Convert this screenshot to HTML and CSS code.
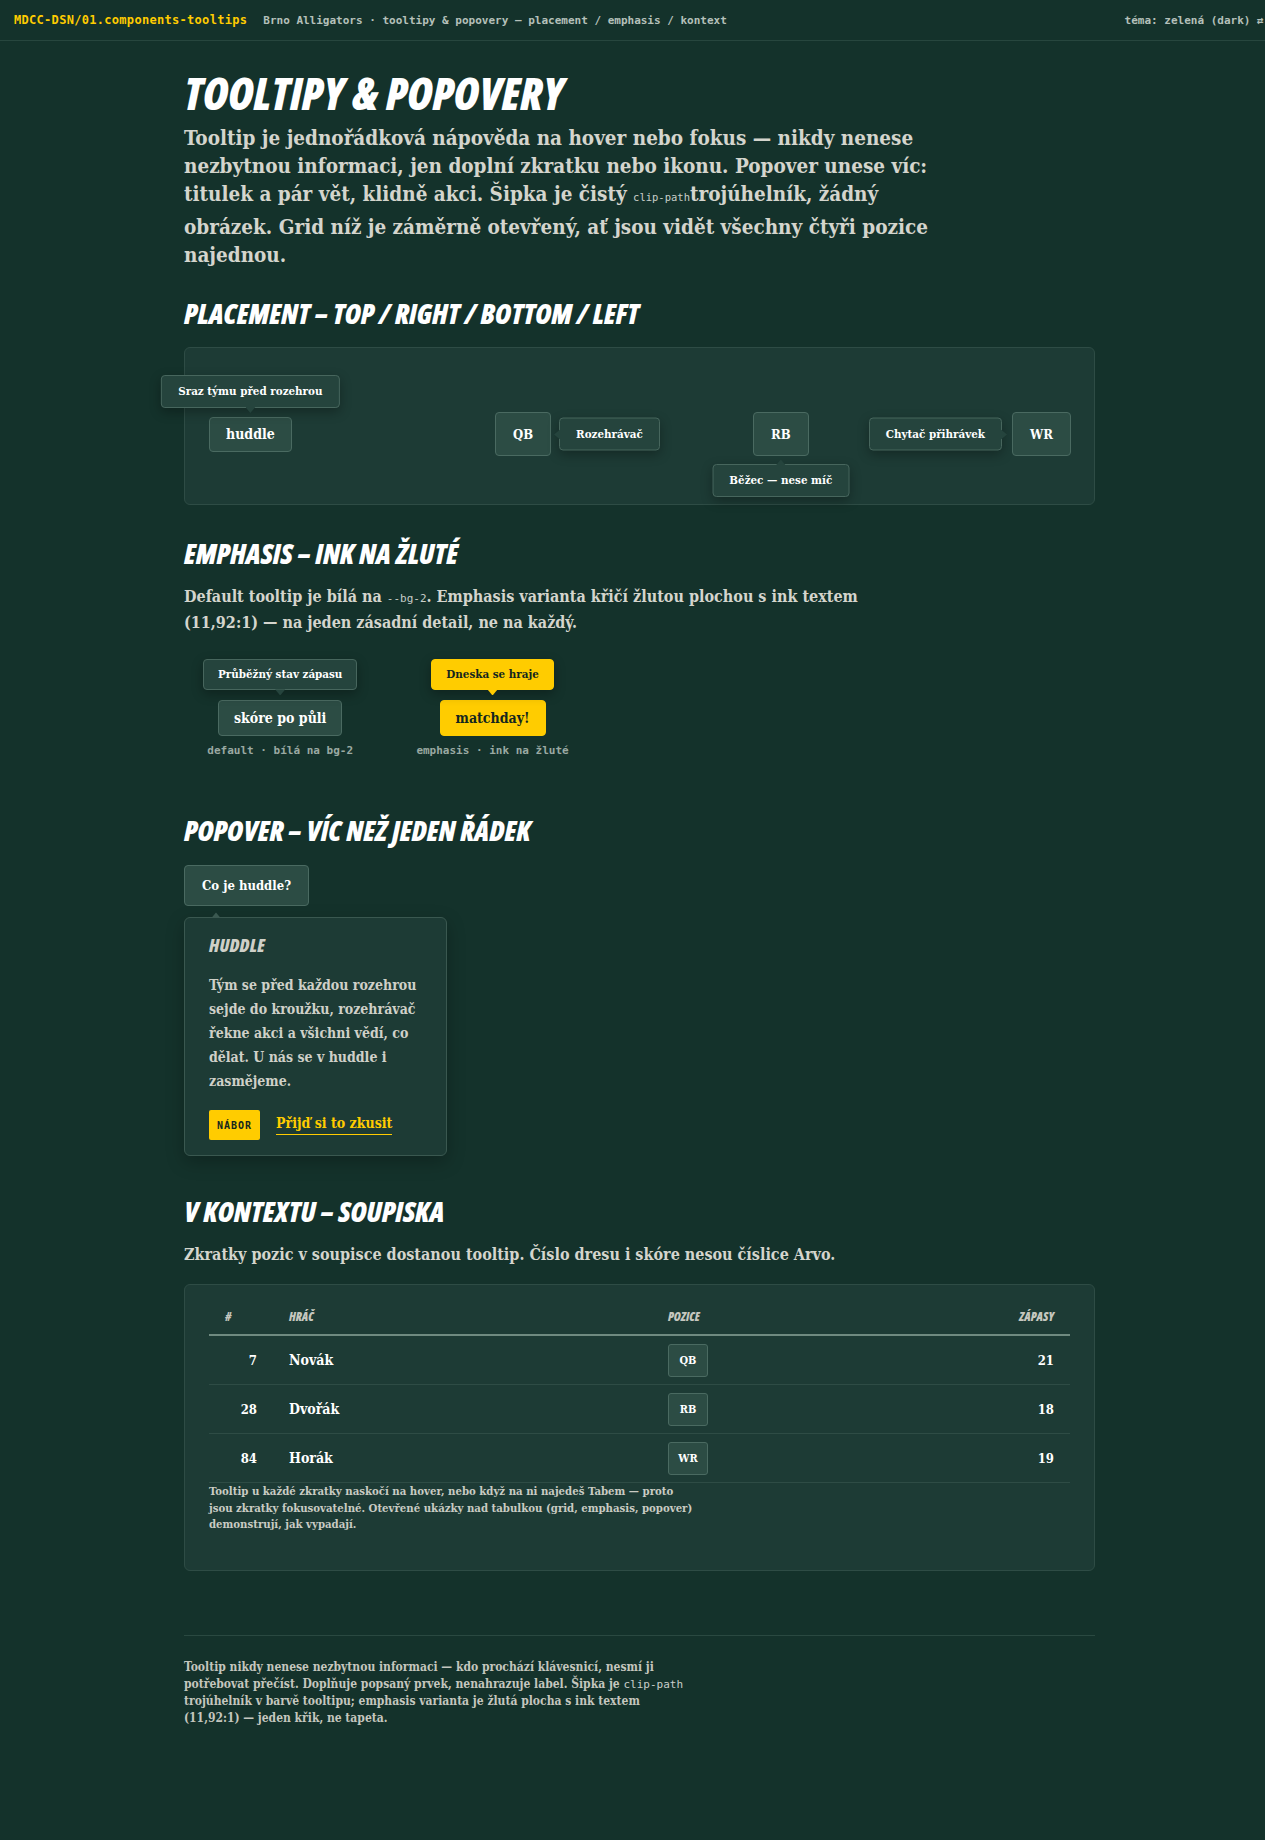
FILE: index.html
```html
<!DOCTYPE html>
<html lang="cs">
<head>
  <meta charset="UTF-8" />
  <meta name="viewport" content="width=device-width, initial-scale=1.0" />
  <title>Tooltipy &amp; popovery | Brno Alligators</title>
  <link rel="stylesheet" href="styles.css">
</head>
<body>

  <header class="topbar">
    <span class="crumb">MDCC-DSN/01.components-tooltips</span>
    <span class="meta">Brno Alligators · tooltipy &amp; popovery — placement / emphasis / kontext</span>
    <span class="theme">téma: zelená (dark) ⇄ světlá</span>
  </header>

  <main class="page">
    <h1>Tooltipy &amp; popovery</h1>
    <p class="lead">
      Tooltip je jednořádková nápověda na hover nebo fokus — nikdy nenese nezbytnou informaci, jen doplní zkratku nebo ikonu.
      Popover unese víc: titulek a pár vět, klidně akci. Šipka je čistý <code>clip-path</code>trojúhelník, žádný obrázek.
      Grid níž je záměrně otevřený, ať jsou vidět všechny čtyři pozice najednou.
    </p>

    <section class="block block-placement">
      <h2>Placement – top / right / bottom / left</h2>
      <div class="card placement">
        <div class="cell">
          <span class="anchor">
            <button class="trigger">huddle</button>
            <span class="tip tip-top">Sraz týmu před rozehrou</span>
          </span>
        </div>
        <div class="cell">
          <span class="anchor">
            <button class="trigger trigger-abbr">QB</button>
            <span class="tip tip-right">Rozehrávač</span>
          </span>
        </div>
        <div class="cell">
          <span class="anchor">
            <button class="trigger trigger-abbr">RB</button>
            <span class="tip tip-bottom">Běžec — nese míč</span>
          </span>
        </div>
        <div class="cell">
          <span class="anchor">
            <button class="trigger trigger-abbr">WR</button>
            <span class="tip tip-left">Chytač přihrávek</span>
          </span>
        </div>
      </div>
    </section>

    <section class="block block-emphasis">
      <h2>Emphasis – ink na žluté</h2>
      <p class="text">
        Default tooltip je bílá na <code>--bg-2</code>. Emphasis varianta křičí žlutou plochou s ink textem
        (11,92:1) — na jeden zásadní detail, ne na každý.
      </p>
      <div class="demo-row">
        <figure class="demo">
          <span class="tip tip-static">Průběžný stav zápasu</span>
          <button class="trigger trigger-md">skóre po půli</button>
          <figcaption>default · bílá na bg-2</figcaption>
        </figure>
        <figure class="demo">
          <span class="tip tip-static tip-em">Dneska se hraje</span>
          <button class="trigger trigger-md trigger-em">matchday!</button>
          <figcaption>emphasis · ink na žluté</figcaption>
        </figure>
      </div>
    </section>

    <section class="block block-popover">
      <h2>Popover – víc než jeden řádek</h2>
      <button class="trigger trigger-lg">Co je huddle?</button>
      <div class="popover">
        <h3>Huddle</h3>
        <p>Tým se před každou rozehrou sejde do kroužku, rozehrávač řekne akci a všichni vědí, co dělat. U nás se v huddle i zasmějeme.</p>
        <div class="popover-actions">
          <span class="badge">Nábor</span>
          <a href="#" class="link">Přijď si to zkusit</a>
        </div>
      </div>
    </section>

    <section class="block block-roster">
      <h2>V kontextu – soupiska</h2>
      <p class="text">Zkratky pozic v soupisce dostanou tooltip. Číslo dresu i skóre nesou číslice Arvo.</p>
      <div class="card roster">
        <table>
          <colgroup>
            <col class="col-num">
            <col class="col-name">
            <col class="col-pos">
            <col>
          </colgroup>
          <thead>
            <tr>
              <th>#</th>
              <th>Hráč</th>
              <th>Pozice</th>
              <th class="right">Zápasy</th>
            </tr>
          </thead>
          <tbody>
            <tr>
              <td class="right num">7</td>
              <td>Novák</td>
              <td><button class="pos">QB</button></td>
              <td class="right num">21</td>
            </tr>
            <tr>
              <td class="right num">28</td>
              <td>Dvořák</td>
              <td><button class="pos">RB</button></td>
              <td class="right num">18</td>
            </tr>
            <tr>
              <td class="right num">84</td>
              <td>Horák</td>
              <td><button class="pos">WR</button></td>
              <td class="right num">19</td>
            </tr>
          </tbody>
        </table>
        <p class="note">Tooltip u každé zkratky naskočí na hover, nebo když na ni najedeš Tabem — proto jsou zkratky fokusovatelné. Otevřené ukázky nad tabulkou (grid, emphasis, popover) demonstrují, jak vypadají.</p>
      </div>
    </section>
  </main>

  <footer class="foot">
    <p>Tooltip nikdy nenese nezbytnou informaci — kdo prochází klávesnicí, nesmí ji potřebovat přečíst. Doplňuje popsaný prvek, nenahrazuje label. Šipka je <code>clip-path</code> trojúhelník v barvě tooltipu; emphasis varianta je žlutá plocha s ink textem (11,92:1) — jeden křik, ne tapeta.</p>
  </footer>

</body>
</html>
```
FILE: styles.css
```css
:root {
  --bg: #14322b;
  --bg-2: #1d3b35;
  --line: #2e4c45;
  --btn: #2c4c44;
  --btn-line: #4a6a61;
  --tip: #25443d;
  --tip-line: #47665d;
  --yellow: #ffcc00;
  --ink: #13261f;
  --text: #f4f3ed;
  --muted: #d4d5cd;
  --mono: "DejaVu Sans Mono", "Liberation Mono", monospace;
  --slab: "DejaVu Serif", "Liberation Serif", serif;
  --display: "Open Sans", "DejaVu Sans", sans-serif;
}

html, body {
  margin: 0;
  padding: 0;
}

body {
  background: var(--bg);
  color: var(--text);
  font-family: var(--slab);
  font-stretch: condensed;
  font-weight: 700;
}

code {
  font-family: var(--mono);
  font-stretch: normal;
  font-weight: 400;
  line-height: 1;
  white-space: nowrap;
  color: #c8cec9;
}

/* top bar */

.topbar {
  display: flex;
  align-items: center;
  gap: 16px;
  height: 40px;
  padding: 0 14px;
  border-bottom: 1px solid #27463e;
  overflow: hidden;
  white-space: nowrap;
  font-family: var(--mono);
  font-stretch: normal;
  font-size: 11px;
  color: #b5c0ba;
}

.crumb {
  color: var(--yellow);
  font-size: 12px;
  letter-spacing: 0.3px;
}

.theme {
  margin-left: auto;
  margin-right: -59px;
}

/* page */

.page {
  max-width: 911px;
  margin: 0 auto;
  padding-left: 14px;
}

h1, h2, h3 {
  font-family: var(--display);
  font-stretch: condensed;
  font-style: italic;
  font-weight: 800;
  text-transform: uppercase;
  color: #fff;
}

h1 {
  margin: 28px 0 0;
  font-size: 44px;
  line-height: 1.1;
}

h2 {
  margin: 0 0 18px;
  font-size: 28px;
  line-height: 32px;
}

.lead {
  margin: 7px 0 0;
  max-width: 752px;
  font-size: 20.5px;
  line-height: 28px;
  color: var(--muted);
}

.lead code {
  display: inline-block;
  font-size: 10.5px;
  line-height: 28px;
  padding-bottom: 2px;
}

.text {
  margin: 0;
  max-width: 720px;
  font-size: 16px;
  line-height: 26px;
  color: var(--muted);
}

.text code {
  font-size: 11px;
}

.block-placement { margin-top: 28px; }
.block-emphasis { margin-top: 32px; }
.block-popover { margin-top: 56px; }
.block-roster { margin-top: 39px; }

.block-emphasis h2,
.block-roster h2 {
  margin-bottom: 15px;
}

.block-popover h2 {
  margin-bottom: 19px;
}

.card {
  background: var(--bg-2);
  border: 1px solid var(--line);
  border-radius: 6px;
}

/* triggers */

.trigger {
  font-family: var(--slab);
  font-stretch: condensed;
  font-weight: 700;
  font-size: 14px;
  color: #fff;
  background: var(--btn);
  border: 1px solid var(--btn-line);
  border-radius: 4px;
  height: 35px;
  padding: 0 16px;
  cursor: pointer;
}

.trigger-abbr {
  height: 44px;
  padding: 0 17px;
  font-size: 13px;
}

.trigger-md {
  height: 36px;
  padding: 0 15px;
}

.trigger-lg {
  height: 41px;
  padding: 0 17px;
  font-size: 13px;
}

.trigger-em {
  background: var(--yellow);
  border-color: var(--yellow);
  color: var(--ink);
}

/* tooltips */

.tip {
  background: var(--tip);
  border: 1px solid var(--tip-line);
  border-radius: 4px;
  padding: 9px 16px;
  font-size: 11.5px;
  line-height: 13px;
  color: #fff;
  white-space: nowrap;
  box-shadow: 0 4px 12px rgba(0, 0, 0, 0.3);
}

.tip::after {
  content: "";
  position: absolute;
  background: inherit;
}

.anchor {
  position: relative;
  display: inline-flex;
}

.anchor .tip {
  position: absolute;
  z-index: 2;
}

.tip-top {
  bottom: calc(100% + 9px);
  left: 50%;
  transform: translateX(-50%);
}

.tip-bottom {
  top: calc(100% + 8px);
  left: 50%;
  transform: translateX(-50%);
}

.tip-right {
  left: calc(100% + 8px);
  top: 50%;
  transform: translateY(-50%);
}

.tip-left {
  right: calc(100% + 10px);
  top: 50%;
  transform: translateY(-50%);
}

.tip-top::after,
.tip-static::after {
  top: 100%;
  left: 50%;
  width: 10px;
  height: 6px;
  margin-left: -5px;
  clip-path: polygon(0 0, 100% 0, 50% 100%);
}

.tip-bottom::after {
  bottom: 100%;
  left: 50%;
  width: 10px;
  height: 6px;
  margin-left: -5px;
  clip-path: polygon(50% 0, 100% 100%, 0 100%);
}

.tip-right::after {
  right: 100%;
  top: 50%;
  width: 6px;
  height: 10px;
  margin-top: -5px;
  clip-path: polygon(100% 0, 100% 100%, 0 50%);
}

.tip-left::after {
  left: 100%;
  top: 50%;
  width: 6px;
  height: 10px;
  margin-top: -5px;
  clip-path: polygon(0 0, 100% 50%, 0 100%);
}

/* placement grid */

.placement {
  display: grid;
  grid-template-columns: 286px 258px 259px 1fr;
  align-items: center;
  padding: 64px 24px 48px;
}

/* emphasis */

.demo-row {
  display: flex;
  gap: 59px;
  padding-left: 19px;
  margin-top: 23px;
}

.demo {
  display: flex;
  flex-direction: column;
  align-items: center;
  margin: 0;
}

.tip-static {
  position: relative;
  padding: 8px 14px;
  margin-bottom: 10px;
}

.tip-em {
  background: var(--yellow);
  border-color: var(--yellow);
  color: var(--ink);
}

.demo figcaption {
  margin-top: 8px;
  font-family: var(--mono);
  font-stretch: normal;
  font-size: 11px;
  line-height: 14px;
  color: #9aa9a2;
}

/* popover */

.popover {
  position: relative;
  box-sizing: border-box;
  width: 263px;
  margin-top: 11px;
  padding: 17px 24px 15px;
  background: var(--bg-2);
  border: 1px solid #3a5850;
  border-radius: 6px;
  box-shadow: 0 6px 18px rgba(0, 0, 0, 0.25);
}

.popover::before {
  content: "";
  position: absolute;
  bottom: 100%;
  left: 26px;
  width: 10px;
  height: 6px;
  background: #3a5850;
  clip-path: polygon(50% 0, 100% 100%, 0 100%);
}

.popover h3 {
  margin: 0;
  font-size: 18px;
  line-height: 20px;
  color: #cfd0c8;
  letter-spacing: 0.3px;
}

.popover p {
  margin: 18px 0 0;
  font-size: 14px;
  line-height: 24px;
  color: #cfd0c8;
}

.popover-actions {
  display: flex;
  align-items: center;
  gap: 16px;
  margin-top: 17px;
}

.badge {
  display: inline-flex;
  align-items: center;
  height: 30px;
  padding: 0 8px;
  background: var(--yellow);
  color: var(--ink);
  border-radius: 2px;
  font-family: var(--mono);
  font-stretch: normal;
  font-size: 10px;
  letter-spacing: 1px;
  text-transform: uppercase;
}

.link {
  color: var(--yellow);
  font-size: 14px;
  text-decoration: none;
  border-bottom: 1px solid var(--yellow);
  padding-bottom: 3px;
}

/* roster */

.block-roster .card {
  margin-top: 16px;
}

.roster {
  padding: 16px 24px 37px;
}

.roster table {
  width: 100%;
  table-layout: fixed;
  border-collapse: separate;
  border-spacing: 0;
}

.col-num { width: 64px; }
.col-name { width: 379px; }
.col-pos { width: 200px; }

.roster th {
  padding: 8px 16px 9px;
  border-bottom: 2px solid #6f8a80;
  text-align: left;
  font-family: var(--display);
  font-stretch: condensed;
  font-style: italic;
  font-weight: 800;
  font-size: 12px;
  line-height: 16px;
  text-transform: uppercase;
  color: #c5c7bf;
}

.roster td {
  height: 48px;
  padding: 0 16px;
  border-bottom: 1px solid var(--line);
  font-size: 14px;
  color: #fff;
  vertical-align: middle;
}

.roster td.num {
  font-size: 13px;
}

.roster .right {
  text-align: right;
}

.pos {
  width: 40px;
  height: 33px;
  padding: 0;
  background: var(--btn);
  border: 1px solid var(--btn-line);
  border-radius: 3px;
  font-family: var(--slab);
  font-stretch: condensed;
  font-weight: 700;
  font-size: 11px;
  color: #fff;
  vertical-align: middle;
}

.note {
  margin: 0;
  max-width: 486px;
  font-size: 11.3px;
  line-height: 16.5px;
  color: #c9cbc3;
}

/* footer */

.foot {
  max-width: 911px;
  margin: 64px auto 0;
  padding: 23px 0 60px 14px;
  box-sizing: content-box;
}

.foot::before {
  content: "";
  display: block;
  height: 1px;
  margin-top: -23px;
  margin-bottom: 23px;
  background: #2a4941;
}

.foot p {
  margin: 0;
  max-width: 500px;
  font-size: 12px;
  line-height: 17px;
  color: #c4c6be;
}

.foot code {
  font-size: 11px;
}
```
